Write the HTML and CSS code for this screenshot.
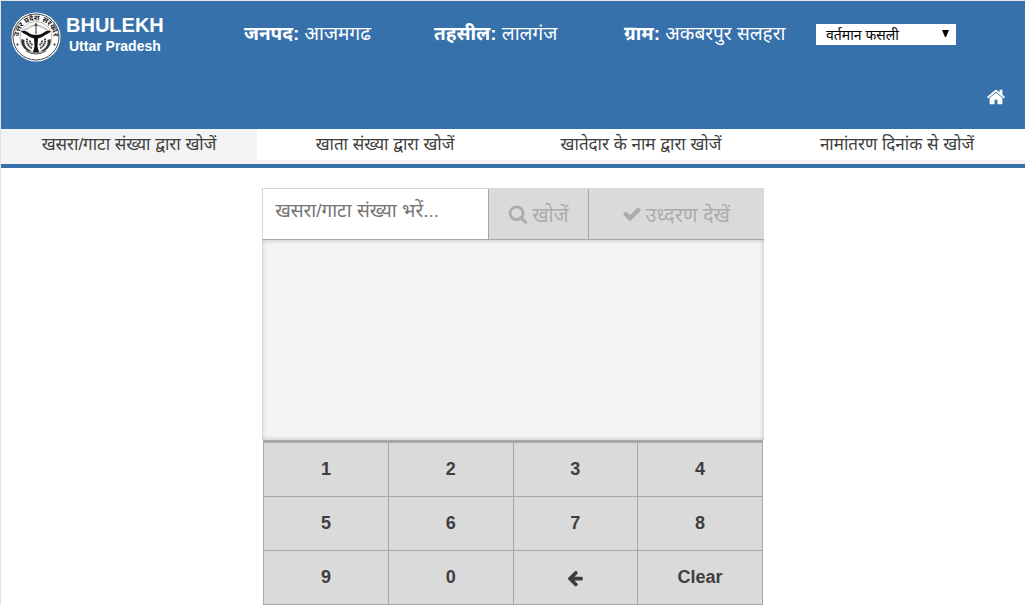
FILE: index.html
```html
<!DOCTYPE html>
<html lang="hi">
<head>
    <meta charset="UTF-8">
    <meta name="viewport" content="width=device-width, initial-scale=1.0">
    <title>BHULEKH Uttar Pradesh</title>
    <link rel="stylesheet" href="styles.css">
</head>
<body>
    <header class="header">
        <div class="header-top">
            <div class="brand">
                <svg class="emblem" viewBox="0 0 100 100" aria-hidden="true">
                    <defs>
                        <path id="ring" d="M16 60A35 35 0 1 1 84 60"/>
                    </defs>
                    <circle cx="50" cy="50" r="49" fill="#fff"/>
                    <circle cx="50" cy="50" r="46" fill="none" stroke="#444" stroke-width="2"/>
                    <circle cx="50" cy="51" r="32" fill="#fff" stroke="#777" stroke-width="1"/>
                    <text class="emblem-text"><textPath href="#ring" startOffset="50%" text-anchor="middle">उत्तर प्रदेश सरकार</textPath></text>
                    <circle cx="13" cy="65" r="2" fill="#222"/>
                    <circle cx="87" cy="65" r="2" fill="#222"/>
                    <!-- bow and arrow -->
                    <path d="M50 21l4 7h-3v17h-2V28h-3z" fill="#333"/>
                    <path d="M25 37Q50 13 75 37M27 36l23-10 23 10" fill="none" stroke="#777" stroke-width="1"/>
                    <!-- rivers -->
                    <path d="M20 38q8-2 13 2 7 6 17 6t17-6q5-4 13-2-3 5-10 7-7 6-16 8l-1 16q1 7 4 12H43q3-5 4-12l-1-16q-9-2-16-8-7-2-10-7z" fill="#111"/>
                    <!-- fishes -->
                    <path d="M21 54l6 2q-2 11 7 18l8 5q-9 1-15-6-8-8-6-19zM79 54l-6 2q2 11-7 18l-8 5q9 1 15-6 8-8 6-19z" fill="#333"/>
                    <path d="M32 53q-2 12 10 20M38 57q-1 5 5 9M68 53q2 12-10 20M62 57q1 5-5 9" fill="none" stroke="#444" stroke-width="4" stroke-dasharray="3 1"/>
                    <path d="M30 78q20 12 40 0" fill="none" stroke="#555" stroke-width="2"/>
                </svg>
                <div class="brand-name">
                    <div class="brand-title">BHULEKH</div>
                    <div class="brand-state">Uttar Pradesh</div>
                </div>
            </div>
            <div class="place"><b>जनपद:</b> आजमगढ</div>
            <div class="place"><b>तहसील:</b> लालगंज</div>
            <div class="place"><b>ग्राम:</b> अकबरपुर सलहरा</div>
            <div class="fasli">
                <select class="fasli-select" aria-label="फसली">
                    <option>वर्तमान फसली</option>
                </select>
            </div>
        </div>
        <a class="home" href="#" aria-label="Home">
            <svg class="icon" viewBox="0 0 1792 1792"><path d="M1472 992v480q0 26-19 45t-45 19h-384v-384h-256v384h-384q-26 0-45-19t-19-45v-480q0-1 .5-3t.5-3l575-474 575 474q1 2 1 6zm223-69l-62 74q-8 9-21 11h-3q-13 0-21-7l-692-577-692 577q-12 8-24 7-13-2-21-11l-62-74q-8-10-7-23.5t11-21.5l719-599q32-26 76-26t76 26l244 204v-195q0-14 9-23t23-9h192q14 0 23 9t9 23v408l219 182q10 8 11 21.5t-7 23.5z"/></svg>
        </a>
    </header>
    <nav class="tabs">
        <a class="tab active" href="#">खसरा/गाटा संख्या द्वारा खोजें</a>
        <a class="tab" href="#">खाता संख्या द्वारा खोजें</a>
        <a class="tab" href="#">खातेदार के नाम द्वारा खोजें</a>
        <a class="tab" href="#">नामांतरण दिनांक से खोजें</a>
    </nav>
    <main class="finder">
        <form class="search">
            <input class="search-input" type="text" placeholder="खसरा/गाटा संख्या भरें..." aria-label="खसरा/गाटा संख्या भरें">
            <button class="search-btn" type="button" disabled>
                <svg class="icon" viewBox="0 0 1792 1792"><path d="M1216 832q0-185-131.5-316.5t-316.5-131.5-316.5 131.5-131.5 316.5 131.5 316.5 316.5 131.5 316.5-131.5 131.5-316.5zm512 832q0 52-38 90t-90 38q-54 0-90-38l-343-342q-179 124-399 124-143 0-273.5-55.5t-225-150-150-225-55.5-273.5 55.5-273.5 150-225 225-150 273.5-55.5 273.5 55.5 225 150 150 225 55.5 273.5q0 220-124 399l343 343q37 37 37 90z"/></svg>
                <span>खोजें</span>
            </button>
            <button class="search-btn" type="button" disabled>
                <svg class="icon" viewBox="0 0 1792 1792"><path d="M1671 566q0 40-28 68l-724 724-136 136q-28 28-68 28t-68-28l-136-136-362-362q-28-28-28-68t28-68l136-136q28-28 68-28t68 28l294 295 656-657q28-28 68-28t68 28l136 136q28 28 28 68z"/></svg>
                <span>उध्दरण देखें</span>
            </button>
        </form>
        <div class="results"></div>
        <div class="keypad">
            <button class="key" type="button">1</button>
            <button class="key" type="button">2</button>
            <button class="key" type="button">3</button>
            <button class="key" type="button">4</button>
            <button class="key" type="button">5</button>
            <button class="key" type="button">6</button>
            <button class="key" type="button">7</button>
            <button class="key" type="button">8</button>
            <button class="key" type="button">9</button>
            <button class="key" type="button">0</button>
            <button class="key" type="button" aria-label="Backspace">
                <svg class="icon icon-small" viewBox="0 0 1792 1792"><path d="M1664 896v128q0 53-32.5 90.5t-84.5 37.5h-704l293 294q38 36 38 90t-38 90l-75 76q-37 37-90 37-52 0-91-37l-651-652q-37-37-37-90 0-52 37-91l651-650q38-38 91-38 52 0 90 38l75 74q38 38 38 91t-38 91l-293 293h704q52 0 84.5 37.5t32.5 90.5z"/></svg>
            </button>
            <button class="key" type="button">Clear</button>
        </div>
    </main>
</body>
</html>
```
FILE: styles.css
```css
* {
    box-sizing: border-box;
}
body {
    margin: 0;
    border-top: 1px solid #e4e4e4;
    border-left: 1px solid #e4e4e4;
    font-family: "Liberation Sans", "Noto Sans", "Noto Sans Devanagari", sans-serif;
    background-color: #fff;
    color: #3e3e3e;
}
button, input, select {
    font-family: inherit;
    margin: 0;
    border: 0;
    border-radius: 0;
}
.icon {
    width: 20px;
    height: 20px;
    fill: currentColor;
}
.icon-small {
    width: 18px;
    height: 18px;
}
.header {
    height: 128px;
    background-color: #3671ac;
    color: #fff;
    display: flex;
    flex-direction: column;
    justify-content: space-between;
}
.header-top {
    display: grid;
    grid-template-columns: 243fr 190fr 190fr 192fr 209fr;
    padding-top: 11px;
}
.brand {
    display: flex;
    gap: 5px;
    padding-left: 10px;
}
.emblem {
    width: 50px;
    height: 50px;
}
.emblem-text {
    font-size: 15px;
    font-weight: bold;
    fill: #222;
}
.brand-name {
    font-weight: bold;
    text-align: center;
}
.brand-title {
    font-size: 20px;
    line-height: 26px;
}
.brand-state {
    font-size: 14px;
    line-height: 16px;
}
.place {
    font-size: 19px;
    line-height: 44px;
    white-space: nowrap;
}
.fasli {
    padding-top: 12px;
}
.fasli-select {
    appearance: none;
    width: 140px;
    height: 21px;
    padding: 0 10px;
    font-size: 14px;
    color: #000;
    background: #fff url("data:image/svg+xml,%3Csvg xmlns='http://www.w3.org/2000/svg' width='7' height='7'%3E%3Cpath d='M0 0h7L4 7H3z'/%3E%3C/svg%3E") no-repeat right 7px top 6px;
}
.home {
    align-self: flex-end;
    height: 42px;
    padding-right: 19px;
    color: #fff;
}
.tabs {
    display: grid;
    grid-template-columns: repeat(4, 1fr);
    padding-bottom: 4px;
    background-color: #f3f3f3;
    border-bottom: 4px solid #3671ac;
}
.tab {
    height: 31px;
    font-size: 17px;
    line-height: 32px;
    text-align: center;
    text-decoration: none;
    white-space: nowrap;
    color: #3e3e3e;
    background-color: #fff;
}
.tab.active {
    background-color: #f3f3f3;
}
.finder {
    width: 49%;
    min-width: 320px;
    margin: 20px auto 0;
}
.search {
    display: grid;
    grid-template-columns: 226fr 100fr 176fr;
    height: 52px;
    border: 1px solid #d6d6d6;
    border-bottom-color: #a6a8a8;
}
.search-input {
    min-width: 0;
    padding: 0 12px 6px;
    font-size: 19px;
    background-color: #fff;
}
.search-input::placeholder {
    color: #757575;
}
.search-btn {
    display: flex;
    align-items: center;
    justify-content: center;
    gap: 4px;
    padding: 0;
    font-size: 20px;
    color: #acacac;
    background-color: #dadada;
    border-left: 1px solid #a6a8a8;
    white-space: nowrap;
}
.results {
    height: 200px;
    background-color: #f4f4f4;
    box-shadow: inset 0 0 5px #bbb;
}
.keypad {
    display: grid;
    grid-template-columns: repeat(4, 1fr);
    gap: 1px;
    margin: 0 1px;
    padding: 3px 1px 1px;
    background-color: #a6a8a8;
}
.key {
    display: flex;
    align-items: center;
    justify-content: center;
    height: 53px;
    padding: 0;
    font-size: 18px;
    font-weight: bold;
    color: #3e3e3e;
    background-color: #dadada;
}
```
